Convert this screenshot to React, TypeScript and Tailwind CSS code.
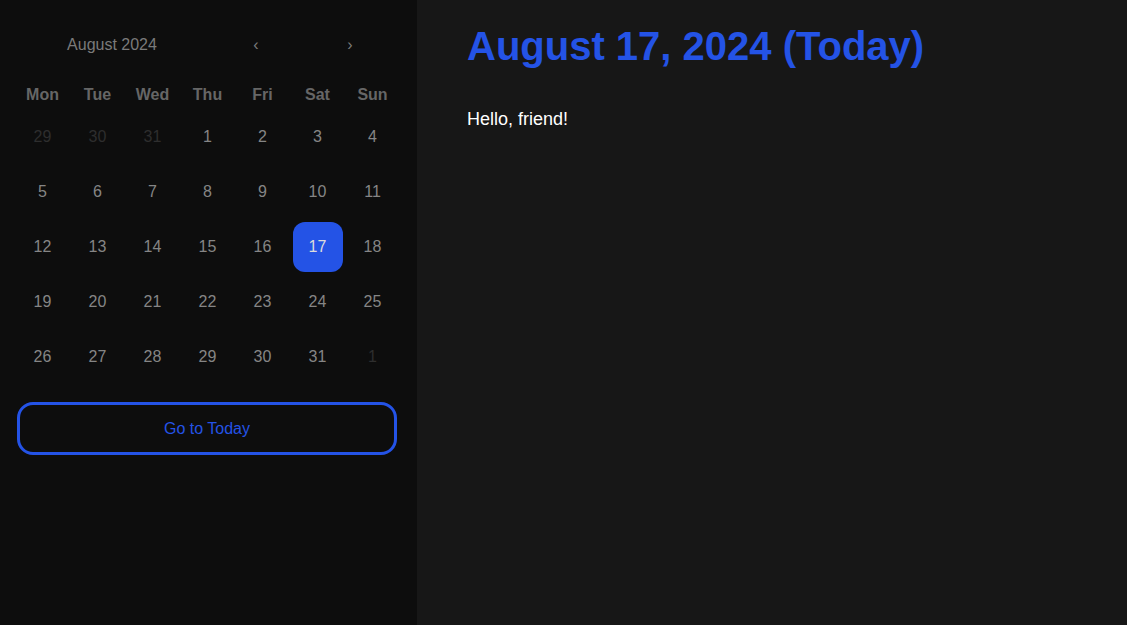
const weekdays = ["Mon", "Tue", "Wed", "Thu", "Fri", "Sat", "Sun"]

type Day = { n: number; muted?: boolean }

const buildDays = (): Day[] => {
  const days: Day[] = [{ n: 29, muted: true }, { n: 30, muted: true }, { n: 31, muted: true }]
  for (let i = 1; i <= 31; i++) days.push({ n: i })
  days.push({ n: 1, muted: true })
  return days
}

const Calendar = () => {
  const days = buildDays()
  return (
    <aside className="w-[417px] shrink-0 bg-[#0d0d0d] px-[15px] pt-[31px]">
      <div className="flex items-center h-[28px] text-[16px] text-[#7a7a7a]">
        <span className="w-[194px] text-center">August 2024</span>
        <button className="w-[94px] text-center">‹</button>
        <button className="w-[94px] text-center">›</button>
      </div>

      <div className="grid grid-cols-7 w-[385px] mt-[21px]">
        {weekdays.map((d) => (
          <div key={d} className="h-[29px] flex items-center justify-center font-bold text-[16px] text-[#666666]">
            {d}
          </div>
        ))}
        {days.map((d, i) => (
          <div key={i} className="h-[55px] flex items-center justify-center">
            {d.n === 17 && !d.muted ? (
              <span className="w-[50px] h-[50px] rounded-xl bg-[#2453e6] text-[#dcdcdc] flex items-center justify-center text-[16px]">
                17
              </span>
            ) : (
              <span className={d.muted ? "text-[16px] text-[#2e2e2e]" : "text-[16px] text-[#858585]"}>
                {d.n}
              </span>
            )}
          </div>
        ))}
      </div>

      <button className="mt-[18px] ml-[2px] w-[380px] h-[53px] rounded-2xl border-[3px] border-[#2453e6] text-[#2453e6] text-[16px]">
        Go to Today
      </button>
    </aside>
  )
}

export default function App() {
  return (
    <div className="flex h-screen w-full overflow-hidden font-['Liberation_Sans',Arial,sans-serif]">
      <Calendar />
      <main className="flex-1 bg-[#171717] pl-[50px] pt-[23px]">
        <h1 className="text-[40px] font-bold text-[#2453e6] leading-[1.15]">August 17, 2024 (Today)</h1>
        <p className="mt-[37px] text-[18px] leading-[1.5] text-white">Hello, friend!</p>
      </main>
    </div>
  )
}
